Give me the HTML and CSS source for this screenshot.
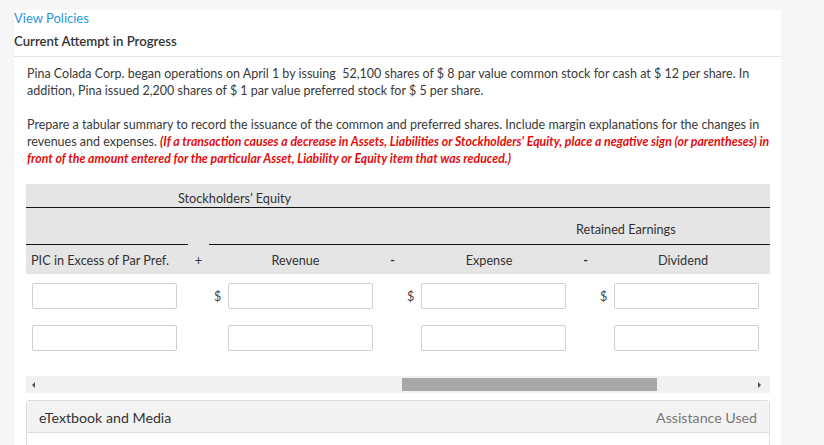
FILE: index.html
```html
<!DOCTYPE html>
<html>
<head>
<meta charset="utf-8">
<link rel="stylesheet" href="styles.css">
</head>
<body>
<div class="panel">
  <div class="head">
    <a class="link">View Policies</a>
    <div class="attempt">Current Attempt in Progress</div>
  </div>
  <div class="content">
    <p class="para">Pina Colada Corp. began operations on April 1 by issuing &nbsp;52,100 shares of $ 8 par value common stock for cash at $ 12 per share. In<br>addition, Pina issued 2,200 shares of $ 1 par value preferred stock for $ 5 per share.</p>
    <p class="para">Prepare a tabular summary to record the issuance of the common and preferred shares. Include margin explanations for the changes in<br>revenues and expenses. <em class="warn">(If a transaction causes a decrease in Assets, Liabilities or Stockholders' Equity, place a negative sign (or parentheses) in<br>front of the amount entered for the particular Asset, Liability or Equity item that was reduced.)</em></p>

    <div class="table">
      <div class="thead">
        <div class="r1 span-all">Stockholders’ Equity</div>
        <div class="r2 colA line"></div>
        <div class="r2 op"></div>
        <div class="r2 span-re line re">Retained Earnings</div>
        <div class="r3 lbl left">PIC in Excess of Par Pref.</div>
        <div class="r3 lbl op">+</div>
        <div class="r3 lbl">Revenue</div>
        <div class="r3 lbl op minus">-</div>
        <div class="r3 lbl">Expense</div>
        <div class="r3 lbl op minus">-</div>
        <div class="r3 lbl">Dividend</div>
      </div>
      <div class="inputs">
        <div class="cellA"><input class="box" type="text"></div>
        <div class="op"></div>
        <div class="cell b"><span class="cur">$</span><input class="box" type="text"></div>
        <div class="op"></div>
        <div class="cell"><span class="cur">$</span><input class="box" type="text"></div>
        <div class="op"></div>
        <div class="cell"><span class="cur">$</span><input class="box" type="text"></div>
      </div>
      <div class="inputs second">
        <div class="cellA"><input class="box" type="text"></div>
        <div class="op"></div>
        <div class="cell b"><span class="cur"></span><input class="box" type="text"></div>
        <div class="op"></div>
        <div class="cell"><span class="cur"></span><input class="box" type="text"></div>
        <div class="op"></div>
        <div class="cell"><span class="cur"></span><input class="box" type="text"></div>
      </div>
      <div class="scrollbar">
        <span class="arrow left-arrow"></span>
        <div class="track"><div class="thumb"></div></div>
        <span class="arrow right-arrow"></span>
      </div>
    </div>

    <div class="footer">
      <div class="footer-head">
        <span class="etext">eTextbook and Media</span>
        <span class="assist">Assistance Used</span>
      </div>
      <div class="footer-body"></div>
    </div>
  </div>
</div>
</body>
</html>
```

FILE: styles.css
```css
html, body {
  margin: 0;
  padding: 0;
}
body {
  background: #f6f6f6;
  font-family: Lato, "Open Sans", sans-serif;
  color: #333;
  height: 445px;
  overflow: hidden;
}
.panel {
  margin: 10px 0 0 14px;
  width: 767px;
  background: #fff;
  min-height: 435px;
}
.head {
  border-bottom: 1px solid #e6e6e6;
  padding-bottom: 7px;
}
.link {
  display: block;
  color: #2a96de;
  font-size: 13px;
  line-height: 16px;
}
.attempt {
  margin-top: 7px;
  font-size: 13.2px;
  line-height: 16px;
  font-weight: 600;
  color: #333;
}
.content {
  padding: 0 11px 0 12px;
}
.para {
  margin: 8px 0 17px 1px;
  font-size: 12.5px;
  line-height: 17px;
  color: #3a3a3a;
  white-space: nowrap;
}
.para + .para {
  margin-top: 0;
}
.warn {
  color: #e30d0d;
  font-weight: 700;
  font-style: italic;
  font-size: 12.3px;
}
.table {
  width: 744px;
}
.thead, .inputs {
  display: grid;
  grid-template-columns: 162px 21px 173px 21px 172px 21px 174px;
}
.thead {
  background: #e5e5e5;
  font-size: 12.7px;
  color: #333;
}
.r1 {
  height: 24px;
  box-sizing: border-box;
  padding: 6px 0 0 152px;
  line-height: 16px;
  border-bottom: 1px solid #111;
}
.span-all {
  grid-column: 1 / -1;
}
.r2 {
  height: 37px;
  box-sizing: border-box;
  padding-top: 13px;
  line-height: 16px;
}
.r2.line {
  border-bottom: 1px solid #111;
}
.span-re {
  grid-column: 3 / -1;
}
.re {
  padding-left: 367px;
}
.r3 {
  height: 29px;
  box-sizing: border-box;
  padding-top: 7px;
  line-height: 16px;
}
.lbl {
  text-align: center;
}
.lbl.left {
  text-align: left;
  padding-left: 5px;
}
.op {
  text-align: center;
}
.minus {
  font-weight: 700;
}
.inputs {
  margin-top: 9px;
  height: 26px;
}
.inputs.second {
  margin-top: 16px;
}
.cellA {
  padding-left: 6px;
}
.cell {
  display: flex;
  align-items: center;
  padding-left: 4px;
}
.cell.b {
  padding-left: 5px;
}
.cur {
  width: 14px;
  font-size: 12.6px;
  color: #444;
}
.box {
  box-sizing: border-box;
  width: 145px;
  height: 26px;
  margin: 0;
  border: 1px solid #cfcfcf;
  border-radius: 2px;
  background: #fff;
  padding: 0 4px;
  font-family: inherit;
  outline: none;
}
.scrollbar {
  margin-top: 25px;
  height: 17px;
  background: #f1f1f1;
  display: flex;
  align-items: center;
}
.arrow {
  width: 0;
  height: 0;
  border-top: 3px solid transparent;
  border-bottom: 3px solid transparent;
}
.left-arrow {
  border-right: 3px solid #505050;
  margin: 0 0 0 6px;
}
.right-arrow {
  border-left: 3px solid #505050;
  margin: 0 9px 0 0;
}
.track {
  flex: 1;
  height: 13px;
  padding-left: 367px;
  padding-right: 101px;
}
.thumb {
  height: 13px;
  background: #a8a8a8;
}
.footer {
  margin-top: 7px;
  width: 744px;
  box-sizing: border-box;
  border: 1px solid #ddd;
  border-radius: 3px 3px 0 0;
}
.footer-head {
  height: 32px;
  box-sizing: border-box;
  background: #f3f3f3;
  border-bottom: 1px solid #ddd;
  display: flex;
  justify-content: space-between;
  align-items: center;
  padding: 1px 12px 0 12px;
  font-size: 14.2px;
}
.etext {
  color: #333;
}
.assist {
  color: #777;
}
.footer-body {
  height: 30px;
}
```
